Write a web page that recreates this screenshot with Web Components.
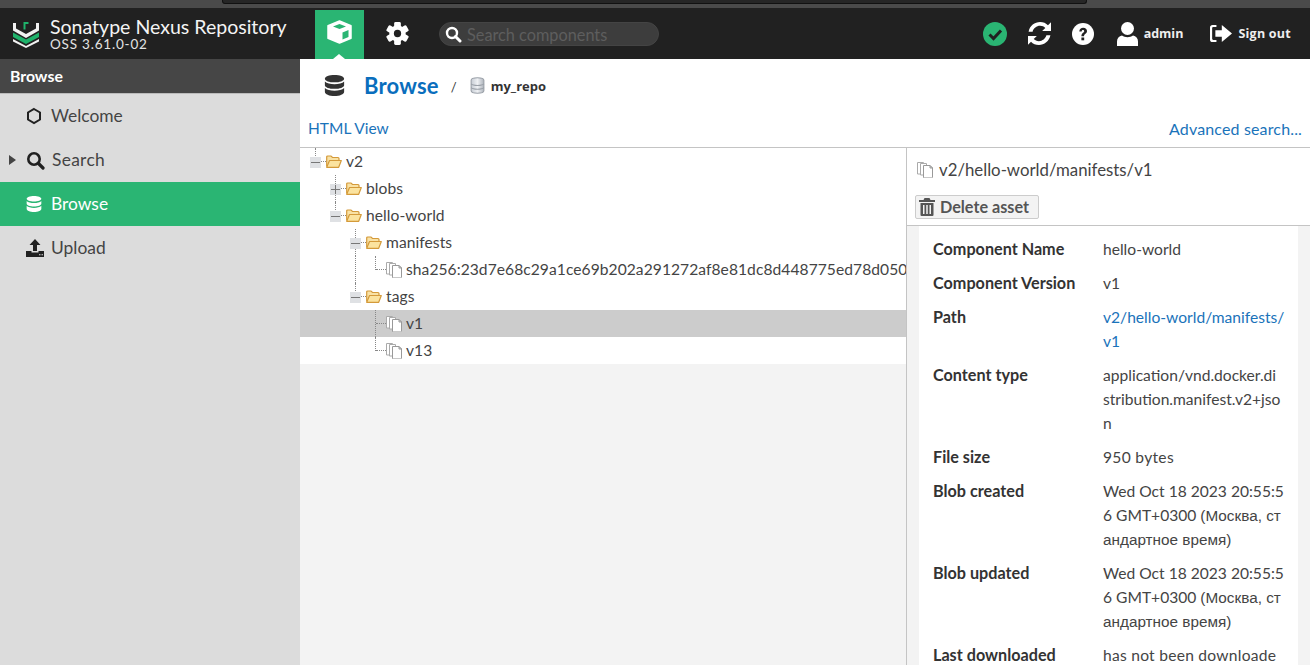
<!DOCTYPE html>
<html>
<head>
<meta charset="utf-8">
<title>Nexus Repository</title>
<style>
  html, body { margin: 0; height: 100%; overflow: hidden; background: #fff; }
  body { font-family: Lato, "Liberation Sans", sans-serif; color: #444; }
</style>
</head>
<body>
<nx-app>
  <nx-header slot="header"></nx-header>
  <nx-sidebar slot="side"></nx-sidebar>
  <nx-browse slot="main"></nx-browse>
</nx-app>

<script>
const ICONS = {
  db: '<svg viewBox="0 0 24 26" width="W" height="H"><path fill="currentColor" d="M12 1C6 1 1 2.8 1 5.2S6 9.400 12 9.400s11-1.800 11-4.200S18 1 12 1zM1 8.400v4.200c0 2.400 5 4.200 11 4.200s11-1.800 11-4.200V8.400c-2 2.200-6.400 3.100-11 3.100S3 10.600 1 8.400zM1 15.800V20c0 2.800 5 5 11 5s11-2.200 11-5v-4.200c-2 2.200-6.400 3.100-11 3.100S3 18 1 15.800z"/></svg>',
  files: '<svg viewBox="0 0 16 16" width="16" height="16"><g fill="#fff" stroke="#aaa"><path d="M.5.5h6v11.500h-6z"/><path d="M3.500 1.500h6v11.500h-6z"/><path d="M6.500 3.500h6.500l2.500 2.500v9.500h-9z" stroke="#999"/></g><path d="M13 3.500V6h2.500z" fill="#ddd" stroke="#999"/><path d="M7 15.500h8.500" stroke="#c8c8c8"/></svg>',
  folder: '<svg viewBox="0 0 16 13" width="16" height="13"><path d="M.7 11.500V2q0-1 1-1h3.300l1.500 1.500h5.500q1 0 1 1V5" fill="#f9e2a5" stroke="#d49a3a" stroke-width="1.200"/><path d="M.7 12.300 3.500 5.500h11.800l-2.600 6.800z" fill="#fbe39f" stroke="#d49a3a" stroke-width="1.200" stroke-linejoin="round"/></svg>'
};

function icon(name, w, h) {
  return ICONS[name].replace('"W"', '"' + w + '"').replace('"H"', '"' + h + '"');
}

class NxApp extends HTMLElement {
  constructor() {
    super();
    this.attachShadow({ mode: 'open' }).innerHTML = `
      <style>
        :host { display: block; width: 1310px; height: 665px; overflow: hidden; }
        .strip { height: 8px; background: #4a4a4a; }
        .strip i { display: block; width: 865px; height: 4px; margin-left: 222px; background: #262626; border-radius: 0 0 3px 3px; border: 1px solid #111; border-top: 0; box-sizing: border-box; }
        .hd { height: 51px; }
        .body { display: flex; height: 606px; }
        .side { width: 300px; flex: none; }
        .main { flex: 1; min-width: 0; }
      </style>
      <div class="strip"><i></i></div>
      <div class="hd"><slot name="header"></slot></div>
      <div class="body">
        <div class="side"><slot name="side"></slot></div>
        <div class="main"><slot name="main"></slot></div>
      </div>`;
  }
}

class NxHeader extends HTMLElement {
  constructor() {
    super();
    const teeth = [0, 60, 120, 180, 240, 300].map(a => `<rect x="8.500" y="0" width="7" height="6" rx="1.500" transform="rotate(${a} 12 12)"/>`).join('');
    this.attachShadow({ mode: 'open' }).innerHTML = `
      <style>
        :host { display: flex; align-items: stretch; height: 51px; background: #212121; color: #fff; }
        .logo { width: 315px; flex: none; display: flex; align-items: center; padding-left: 12px; box-sizing: border-box; gap: 10px; }
        .names { padding-top: 2px; }
        .t1 { font-size: 19.550px; line-height: 20px; color: #f4f4f4; white-space: nowrap; }
        .t2 { font-size: 13.500px; line-height: 15px; letter-spacing: .8px; color: #e4e4e4; }
        .tab { width: 49px; margin-top: 2px; display: flex; align-items: center; justify-content: center; position: relative; }
        .tab.on { background: #2ab573; }
        .tab.on::after { content: ""; position: absolute; bottom: 0; left: 18px; border: 6px solid transparent; border-top: 0; border-bottom: 5px solid #fff; }
        .gear { width: 66px; margin-top: 0; }
        .search { margin-left: 9px; margin-top: 14px; width: 220px; height: 24px; box-sizing: border-box; border-radius: 12px; background: #3d3d3d; border: 1px solid #444; display: flex; align-items: center; padding-left: 5px; gap: 5px; color: #5e5e5e; font-size: 16.300px; }
        .right { margin-left: auto; display: flex; align-items: center; font-family: "Open Sans", sans-serif; font-weight: 700; font-size: 12.500px; color: #eee; padding-right: 19px; }
        .right svg { display: block; flex: none; }
        .check { margin-right: 21px; } .sync { margin-right: 21px; } .help { margin-right: 23px; }
        .user { display: flex; align-items: center; gap: 6px; margin-right: 27px; }
        .out { display: flex; align-items: center; gap: 6px; letter-spacing: .25px; }
      </style>
      <div class="logo">
        <svg width="28" height="29" viewBox="0 0 28 29">
          <path d="M1 4h3v5.500l10 5.500 10-5.500V4h3v7.500L14 19 1 11.500z" fill="#f2f2f2"/>
          <path d="M1 13.500 14 20.500l13-7v4.500L14 25 1 18z" fill="#1fb26b"/>
          <path d="M1 20 14 27 27 20v2.500L14 29 1 22.500z" fill="#f2f2f2"/>
          <path d="M11.500 3h5v2h-3v5.500h-2z" fill="#1fb26b"/>
        </svg>
        <div class="names"><div class="t1">Sonatype Nexus Repository</div><div class="t2">OSS 3.61.0-02</div></div>
      </div>
      <div class="tab on">
        <svg width="25" height="24" viewBox="0 0 25 24" style="margin-top:-5px">
          <path fill="#fff" stroke="#fff" stroke-width="1.500" stroke-linejoin="round" d="M12.500 1 24 5.800v12.400L12.500 23 1 18.200V5.800z"/>
          <path fill="#2ab573" d="M12.500 4 19 6.600 12.500 9 6 6.600z"/>
          <path fill="#2ab573" d="M15.500 12.500 21.500 10v7l-6 2.500z"/>
        </svg>
      </div>
      <div class="tab gear">
        <svg width="23" height="23" viewBox="0 0 24 24"><g fill="#fff">${teeth}<circle cx="12" cy="12" r="8.500"/></g><circle cx="12" cy="12" r="3.800" fill="#212121"/></svg>
      </div>
      <div class="search">
        <svg width="17" height="17" viewBox="0 0 17 17"><circle cx="7" cy="7" r="5" fill="none" stroke="#fff" stroke-width="2.400"/><path d="M10.500 10.500 15 15" stroke="#fff" stroke-width="3" stroke-linecap="round"/></svg>
        <span>Search components</span>
      </div>
      <div class="right">
        <svg class="check" width="24" height="24" viewBox="0 0 24 24"><circle cx="12" cy="12" r="12" fill="#2ab573"/><path d="M6.500 12.500 10.500 16.500 18 8.500" fill="none" stroke="#212121" stroke-width="3"/></svg>
        <svg class="sync" width="23" height="23" viewBox="2.500 2.500 19 19"><path fill="#fff" d="M3 10.500C4 5.500 8 2.500 12.500 2.500c2.600 0 4.900 1 6.500 2.700L21.500 2.700V10h-7.300l2.600-2.600c-1-1-2.600-1.700-4.300-1.700-3 0-5.400 2-6.200 4.800zM21 13.500c-1 5-5 8-9.500 8-2.600 0-4.900-1-6.500-2.700l-2.500 2.500V14h7.300l-2.600 2.600c1 1 2.600 1.700 4.300 1.700 3 0 5.400-2 6.200-4.800z"/></svg>
        <svg class="help" width="22" height="22" viewBox="0 0 22 22"><circle cx="11" cy="11" r="11" fill="#fff"/><path d="M7.300 8.500C7.500 6 9 4.800 11.200 4.800c2.300 0 3.800 1.400 3.800 3.300 0 2.800-3 2.800-3 5.200H9.400c0-3.400 2.800-3.500 2.800-5 0-.7-.5-1.200-1.200-1.200-.8 0-1.200.5-1.300 1.400z" fill="#212121"/><rect x="9.400" y="14.500" width="2.800" height="2.800" fill="#212121"/></svg>
        <div class="user">
          <svg width="21" height="24" viewBox="0 0 21 24"><circle cx="10.500" cy="6.500" r="6.500" fill="#fff"/><path d="M0 24v-4.500C0 16 2 14 5 13.500c3 2.300 8 2.300 11 0 3 .5 5 2.500 5 6V24z" fill="#fff"/></svg>
          <span>admin</span>
        </div>
        <div class="out">
          <svg width="22" height="19" viewBox="1 .5 20.500 17"><path fill="#fff" d="M7 1H3.500Q1 1 1 3.500v11Q1 17 3.500 17H7v-2H4q-1 0-1-1V4q0-1 1-1h3z"/><path fill="#fff" d="M6 6h6V1l9.500 8-9.500 8v-5H6z"/></svg>
          <span>Sign out</span>
        </div>
      </div>`;
  }
}

class NxNavItem extends HTMLElement {
  constructor() {
    super();
    this.attachShadow({ mode: 'open' }).innerHTML = `
      <style>
        :host { display: flex; align-items: center; height: 42px; padding-bottom: 2px; font-size: 17.400px; color: #444; position: relative; padding-left: 51px; }
        :host([active]) { background: #2ab573; color: #fff; }
        .ic { position: absolute; left: 24px; top: 0; bottom: 0; width: 22px; display: flex; align-items: center; justify-content: center; color: #212121; }
        :host([active]) .ic { color: #fff; }
        .arrow { position: absolute; left: 9px; top: 17px; border: 5px solid transparent; border-left: 7px solid #444; border-right: 0; display: none; }
        :host([expander]) .arrow { display: block; }
      </style>
      <span class="arrow"></span>
      <span class="ic"><slot name="icon"></slot></span>
      <slot></slot>`;
  }
}

class NxSidebar extends HTMLElement {
  constructor() {
    super();
    this.attachShadow({ mode: 'open' }).innerHTML = `
      <style>
        :host { display: block; height: 606px; background: #dcdcdc; }
        .title { height: 34px; line-height: 34px; padding-left: 10px; font-size: 15.800px; font-weight: 700; color: #fff; background: #464646; border-bottom: 1px solid #bbb; }
        svg { display: block; }
      </style>
      <div class="title">Browse</div>
      <nx-nav-item>
        <svg slot="icon" width="16" height="18" viewBox="0 0 16 18" style="margin-right:2px"><path d="M8 2 14 5.500v7L8 16 2 12.500v-7z" fill="none" stroke="currentColor" stroke-width="2"/></svg>
        Welcome
      </nx-nav-item>
      <nx-nav-item expander>
        <svg slot="icon" width="19" height="19" viewBox="0 0 19 19"><circle cx="8" cy="8" r="5.700" fill="none" stroke="currentColor" stroke-width="2.600"/><path d="M12.500 12.500 17 17" stroke="currentColor" stroke-width="3.200" stroke-linecap="round"/></svg>
        <span style="margin-left:1px;letter-spacing:.3px">Search</span>
      </nx-nav-item>
      <nx-nav-item active>
        <span slot="icon" style="margin-right:2px">${icon('db', 16, 18)}</span>
        Browse
      </nx-nav-item>
      <nx-nav-item>
        <svg slot="icon" width="18" height="18" viewBox="0 0 18 18"><path fill="currentColor" d="M9 0 14.500 6H11v6H7V6H3.500z"/><path fill="currentColor" fill-rule="evenodd" d="M0 12h5.500v1.500h7V12H18v6H0zM13 15.300v1h1.500v-1zM15.500 15.300v1H17v-1z"/></svg>
        Upload
      </nx-nav-item>`;
  }
}

class NxTreeNode extends HTMLElement {
  constructor() {
    super();
    this.attachShadow({ mode: 'open' });
  }
  connectedCallback() {
    const depth = +this.getAttribute('depth') || 0;
    const exp = this.getAttribute('exp');
    const leaf = !exp;
    const last = this.hasAttribute('last');
    const guides = (this.getAttribute('guides') || '').split(',').filter(Boolean).map(Number);
    const box = 10 + depth * 20;
    this.shadowRoot.innerHTML = `
      <style>
        :host { display: flex; align-items: center; height: 27px; position: relative; white-space: nowrap; overflow: hidden; font-size: 15.600px; letter-spacing: .06px; color: #444; background: #fff; padding-left: ${box + 16}px; }
        :host([selected]) { background: #ccc; }
        .g { position: absolute; top: 0; bottom: 0; width: 0; border-left: 1px dotted #888; }
        .h { position: absolute; top: 13px; left: ${box + 6}px; width: 10px; border-top: 1px dotted #888; }
        .v { position: absolute; top: 0; left: ${box + 5}px; height: ${last ? 14 : 27}px; border-left: 1px dotted #888; }
        .exp { position: absolute; left: ${box}px; top: 9px; width: 11px; height: 11px; background: #dfe1e4; }
        .exp::before { content: ""; position: absolute; left: 1px; right: 1px; top: 5px; height: 1px; background: #777; }
        .exp.plus::after { content: ""; position: absolute; top: 1px; bottom: 1px; left: 5px; width: 1px; background: #777; }
        .ic { display: inline-flex; margin-right: 4px; position: relative; }
        .ic svg { display: block; }
        .t { position: relative; margin-top: -2px; }
      </style>
      ${guides.map(x => `<span class="g" style="left:${x}px"></span>`).join('')}
      <span class="v"></span><span class="h"></span>
      ${exp ? `<span class="exp ${exp === 'plus' ? 'plus' : ''}"></span>` : ''}
      <span class="ic">${leaf ? ICONS.files : ICONS.folder}</span>
      <span class="t"><slot></slot></span>`;
  }
}

class NxField extends HTMLElement {
  constructor() {
    super();
    this.attachShadow({ mode: 'open' }).innerHTML = `
      <style>
        :host { display: grid; grid-template-columns: 170px 1fr; padding-bottom: 10px; font-size: 15.600px; line-height: 24px; color: #444; white-space: nowrap; }
        b { font-weight: 700; font-size: 16.200px; color: #333; }
      </style>
      <b></b><div><slot></slot></div>`;
    this.shadowRoot.querySelector('b').textContent = this.getAttribute('label');
  }
}

// the Cyrillic part comes out in another face in the reference
const ru = t => `<span style="font-family:'Liberation Sans',sans-serif;font-size:15.300px;line-height:1">${t}</span>`;
const DATE = `Wed Oct 18 2023 20:55:5<br>6 GMT+0300 ${ru('(Москва, ст')}<br>${ru('андартное время)')}`;

class NxBrowse extends HTMLElement {
  constructor() {
    super();
    this.attachShadow({ mode: 'open' }).innerHTML = `
      <style>
        :host { display: block; height: 606px; background: #fff; }
        .crumb { height: 53px; display: flex; align-items: center; color: #333; }
        .crumb .db { margin-left: 24px; width: 40px; color: #333; }
        .crumb .db svg { display: block; }
        h1 { margin: 0; font-size: 22px; font-weight: 700; color: #0a6ebd; letter-spacing: .2px; }
        .sep { margin: 2px 13px 0 12px; font-size: 13px; }
        .repo { font-family: "Open Sans", sans-serif; font-size: 13px; font-weight: 700; margin-left: 6px; }
        .links { height: 32px; padding: 0 8px 3px; display: flex; justify-content: space-between; align-items: center; font-size: 15.500px; color: #1a73ba; border-bottom: 1px solid #c4c4c4; }
        .links span + span { font-size: 16px; letter-spacing: .15px; }
        .panes { display: flex; height: 517px; }
        .tree { width: 606px; flex: none; background: #f3f3f3; border-right: 1px solid #c4c4c4; overflow: hidden; }
        .detail { flex: 1; min-width: 0; display: flex; flex-direction: column; }
        .path { height: 43px; padding: 0 0 4px 10px; display: flex; align-items: center; gap: 6px; font-size: 16.800px; color: #444; }
        .path svg { display: block; }
        .bar { height: 30px; border-bottom: 1px solid #c4c4c4; padding-left: 8px; }
        button { font: inherit; font-weight: 700; font-size: 16.200px; color: #555; background: #f3f3f3; border: 1px solid #ccc; border-radius: 2px; height: 24px; width: 124px; padding: 0 0 2px 3px; display: flex; align-items: center; gap: 5px; }
        button svg { margin-top: 2px; }
        .wrap { flex: 1; min-height: 0; background: #f3f3f3; padding: 0 12px; overflow: hidden; }
        .card { background: #fff; padding: 11px 14px 0; min-height: 100%; box-sizing: border-box; }
        a { color: #1a73ba; text-decoration: none; }
      </style>
      <div class="crumb">
        <span class="db">${icon('db', 21, 23)}</span>
        <h1>Browse</h1>
        <span class="sep">/</span>
        <svg width="15" height="17" viewBox="0 0 14 16"><defs><linearGradient id="g" x1="0" x2="1"><stop offset="0" stop-color="#c6ccd4"/><stop offset=".5" stop-color="#eef0f3"/><stop offset="1" stop-color="#aeb4bc"/></linearGradient></defs><path d="M1 3c0-3 12-3 12 0v10c0 3-12 3-12 0z" fill="url(#g)" stroke="#9aa0a8"/><path d="M1 6.500c2 2 10 2 12 0M1 10c2 2 10 2 12 0" fill="none" stroke="#9aa0a8"/></svg>
        <span class="repo">my_repo</span>
      </div>
      <div class="links"><span>HTML View</span><span>Advanced search...</span></div>
      <div class="panes">
        <div class="tree">
          <nx-tree-node depth="0" exp="minus" last>v2</nx-tree-node>
          <nx-tree-node depth="1" exp="plus">blobs</nx-tree-node>
          <nx-tree-node depth="1" exp="minus" last>hello-world</nx-tree-node>
          <nx-tree-node depth="2" exp="minus">manifests</nx-tree-node>
          <nx-tree-node depth="3" guides="55" last>sha256:23d7e68c29a1ce69b202a291272af8e81dc8d448775ed78d050</nx-tree-node>
          <nx-tree-node depth="2" exp="minus" last>tags</nx-tree-node>
          <nx-tree-node depth="3" selected>v1</nx-tree-node>
          <nx-tree-node depth="3" last>v13</nx-tree-node>
        </div>
        <div class="detail">
          <div class="path">${ICONS.files}<span>v2/hello-world/manifests/v1</span></div>
          <div class="bar"><button>
            <svg width="16" height="18" viewBox="0 0 16 18"><path fill="#555" fill-rule="evenodd" d="M5.500 0h5l1 2H16v2H0V2h4.500zM1.500 5h13v12q0 1-1 1h-11q-1 0-1-1zM4 7v9h1.500V7zM7.250 7v9h1.500V7zM10.500 7v9H12V7z"/></svg>
            Delete asset</button></div>
          <div class="wrap"><div class="card">
            <nx-field label="Component Name">hello-world</nx-field>
            <nx-field label="Component Version">v1</nx-field>
            <nx-field label="Path"><a>v2/hello-world/manifests/<br>v1</a></nx-field>
            <nx-field label="Content type">application/vnd.docker.di<br>stribution.manifest.v2+jso<br>n</nx-field>
            <nx-field label="File size"><span style="letter-spacing:.3px">950 bytes</span></nx-field>
            <nx-field label="Blob created">${DATE}</nx-field>
            <nx-field label="Blob updated">${DATE}</nx-field>
            <nx-field label="Last downloaded"><span style="letter-spacing:.25px">has not been downloade</span></nx-field>
          </div></div>
        </div>
      </div>`;
  }
}

customElements.define('nx-tree-node', NxTreeNode);
customElements.define('nx-field', NxField);
customElements.define('nx-app', NxApp);
customElements.define('nx-header', NxHeader);
customElements.define('nx-nav-item', NxNavItem);
customElements.define('nx-sidebar', NxSidebar);
customElements.define('nx-browse', NxBrowse);
</script>
</body>
</html>
